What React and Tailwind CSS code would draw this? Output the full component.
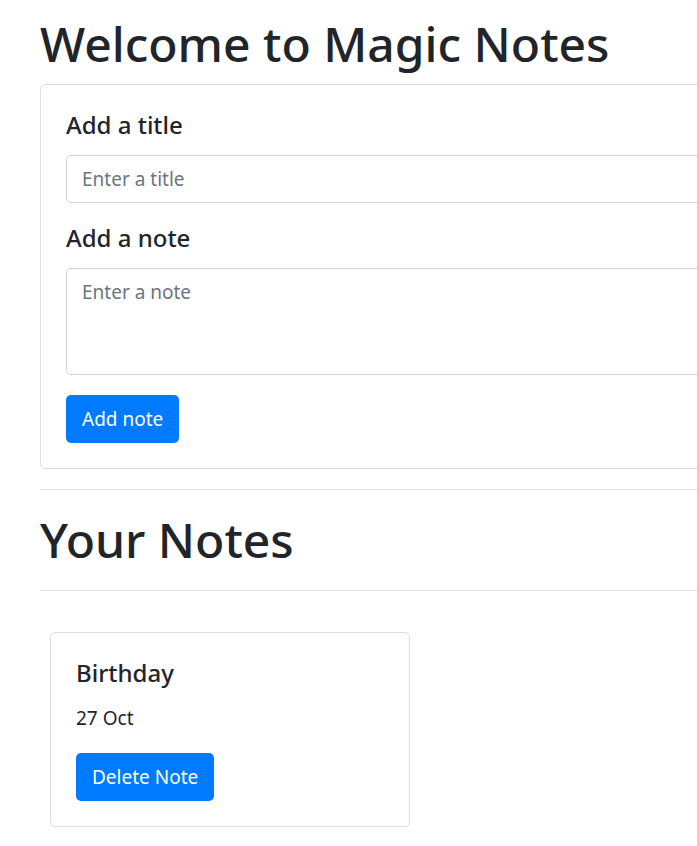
export default function App() {
  return (
    <div className="w-[697px] h-[846px] overflow-hidden bg-white text-[#212529] font-['Noto_Sans',sans-serif]">
      <div className="w-[1100px] pl-[40px] pt-[14px]">
        <h1 className="text-[48px] leading-[60px] font-medium mb-[10px]">Welcome to Magic Notes</h1>
        <div className="border border-[rgba(0,0,0,0.125)] rounded-[5px] p-[25px]">
          <h5 className="text-[24px] leading-[30px] font-medium mb-[15px]">Add a title</h5>
          <input
            className="block w-full h-[48px] border border-[#ced4da] rounded-[5px] px-[15px] text-[19px] text-[#495057] placeholder:text-[#6c757d] outline-none"
            placeholder="Enter a title"
          />
          <h5 className="text-[24px] leading-[30px] font-medium mt-[20px] mb-[15px]">Add a note</h5>
          <textarea
            className="block w-full h-[107px] border border-[#ced4da] rounded-[5px] px-[15px] py-[8px] text-[19px] leading-[30px] text-[#495057] placeholder:text-[#6c757d] outline-none resize-none"
            placeholder="Enter a note"
          />
          <button className="mt-[20px] h-[48px] px-[16px] bg-[#007bff] text-white text-[19px] leading-[30px] rounded-[5px]">
            Add note
          </button>
        </div>
        <hr className="my-[20px] border-0 border-t border-[rgba(0,0,0,0.1)]" />
        <h1 className="text-[48px] leading-[60px] font-medium">Your Notes</h1>
        <hr className="mt-[20px] border-0 border-t border-[rgba(0,0,0,0.1)]" />
        <div className="pt-[41px] pl-[10px]">
          <div className="w-[360px] border border-[rgba(0,0,0,0.125)] rounded-[5px] p-[25px]">
            <h5 className="text-[24px] leading-[30px] font-medium mb-[15px]">Birthday</h5>
            <p className="text-[19px] leading-[30px] mb-[20px]">27 Oct</p>
            <button className="h-[48px] px-[16px] bg-[#007bff] text-white text-[19px] leading-[30px] rounded-[5px]">
              Delete Note
            </button>
          </div>
        </div>
      </div>
    </div>
  );
}
